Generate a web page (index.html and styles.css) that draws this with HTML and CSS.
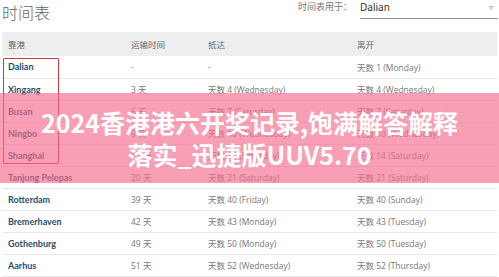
FILE: index.html
```html
<!DOCTYPE html>
<html>
	<head>
		<meta charset="UTF-8">
		<title>时间表</title>
		<link rel="stylesheet" href="styles.css">
	</head>
	<body>
		<div class="top_bar">
			<div class="page_title">时间表</div>
			<div class="pick">
				<span class="pick_label">时间表用于：</span>
				<div class="pick_box">
					<span>Dalian</span>
					<span class="pick_arrow">&#9663;</span>
				</div>
			</div>
		</div>
		<div class="table_wrap">
			<table class="schedule">
				<tr class="head_row">
					<th class="c1">靠港</th>
					<th class="c2">运输时间</th>
					<th class="c3">抵达</th>
					<th class="c4">离开</th>
				</tr>
				<tr><td class="port">Dalian</td><td>-</td><td>-</td><td>天数 1 (Monday)</td></tr>
				<tr><td class="port">Xingang</td><td>3 天</td><td>天数 4 (Wednesday)</td><td>天数 4 (Wednesday)</td></tr>
				<tr><td class="port">Busan</td><td>6 天</td><td>天数 7 (Saturday)</td><td>天数 7 (Saturday)</td></tr>
				<tr><td class="port">Ningbo</td><td>9 天</td><td>天数 10 (Wednesday)</td><td>天数 10 (Wednesday)</td></tr>
				<tr><td class="port">Shanghai</td><td>13 天</td><td>天数 14 (Saturday)</td><td>天数 14 (Saturday)</td></tr>
				<tr><td class="port">Tanjung Pelepas</td><td>20 天</td><td>天数 21 (Saturday)</td><td>天数 21 (Saturday)</td></tr>
				<tr><td class="port">Rotterdam</td><td>39 天</td><td>天数 40 (Friday)</td><td>天数 40 (Sunday)</td></tr>
				<tr><td class="port">Bremerhaven</td><td>42 天</td><td>天数 43 (Monday)</td><td>天数 43 (Tuesday)</td></tr>
				<tr><td class="port">Gothenburg</td><td>49 天</td><td>天数 50 (Monday)</td><td>天数 50 (Tuesday)</td></tr>
				<tr><td class="port">Aarhus</td><td>51 天</td><td>天数 52 (Wednesday)</td><td>天数 52 (Thursday)</td></tr>
			</table>
			<div class="mark"></div>
		</div>
		<div class="banner">2024香港港六开奖记录,饱满解答解释<br>落实_迅捷版UUV5.70</div>
	</body>
</html>
```

FILE: styles.css
```css
*{margin: 0;padding: 0;box-sizing: border-box;}
body{
	width: 499px;
	height: 277px;
	overflow: hidden;
	background: #fff;
	font-family: "Noto Sans", "Noto Sans CJK SC", sans-serif;
	color: #777;
	position: relative;
}
.top_bar{
	height: 32px;
	display: flex;
	justify-content: space-between;
	align-items: flex-start;
	padding-left: 2px;
}
.page_title{
	font-family: "Noto Sans CJK SC", sans-serif;
	font-size: 16px;
	font-weight: 300;
	line-height: 24px;
	color: #666;
}
.pick{
	display: flex;
	align-items: flex-start;
	padding-right: 1px;
}
.pick_label{
	font-family: "Noto Sans CJK SC", sans-serif;
	font-size: 9px;
	line-height: 14px;
	color: #777;
	margin-right: 8px;
}
.pick_box{
	width: 138px;
	height: 19px;
	border-bottom: 1px solid #999;
	display: flex;
	justify-content: space-between;
	font-size: 10px;
	line-height: 14px;
	color: #333;
}
.pick_arrow{
	font-size: 8px;
	color: #888;
	margin-right: 5px;
}
.table_wrap{
	position: relative;
	margin: 0 2px;
}
.schedule{
	width: 495px;
	border-collapse: collapse;
	font-size: 8.5px;
}
.schedule th{
	background: #eeeeee;
	height: 24px;
	text-align: left;
	font-weight: normal;
	color: #666;
	padding-left: 6px;
	font-family: "Noto Sans CJK SC", sans-serif;
}
.schedule td{
	height: 22px;
	padding-left: 6px;
	border-bottom: 1px solid #e8e8e8;
	white-space: nowrap;
	font-family: "Open Sans", "Noto Sans CJK SC", sans-serif;
}
.c1{width: 123px;}
.c2{width: 77px;}
.c3{width: 149px;}
.schedule td.port{
	font-family: "Lato", sans-serif;
	font-weight: bold;
	font-size: 9px;
	color: #24506c;
}
/* red frame round the first five ports */
.mark{
	position: absolute;
	left: 1px;
	top: 26px;
	width: 56px;
	height: 106px;
	border: 1.5px solid #cc3b3b;
	border-radius: 1px;
}
.banner{
	position: absolute;
	left: 0;
	top: 93px;
	width: 499px;
	height: 90px;
	padding-top: 13px;
	background: rgba(244, 108, 142, 0.65);
	color: #fff;
	text-align: center;
	font-family: "Noto Sans CJK SC", sans-serif;
	font-weight: bold;
	font-size: 25px;
	line-height: 32px;
}
```
